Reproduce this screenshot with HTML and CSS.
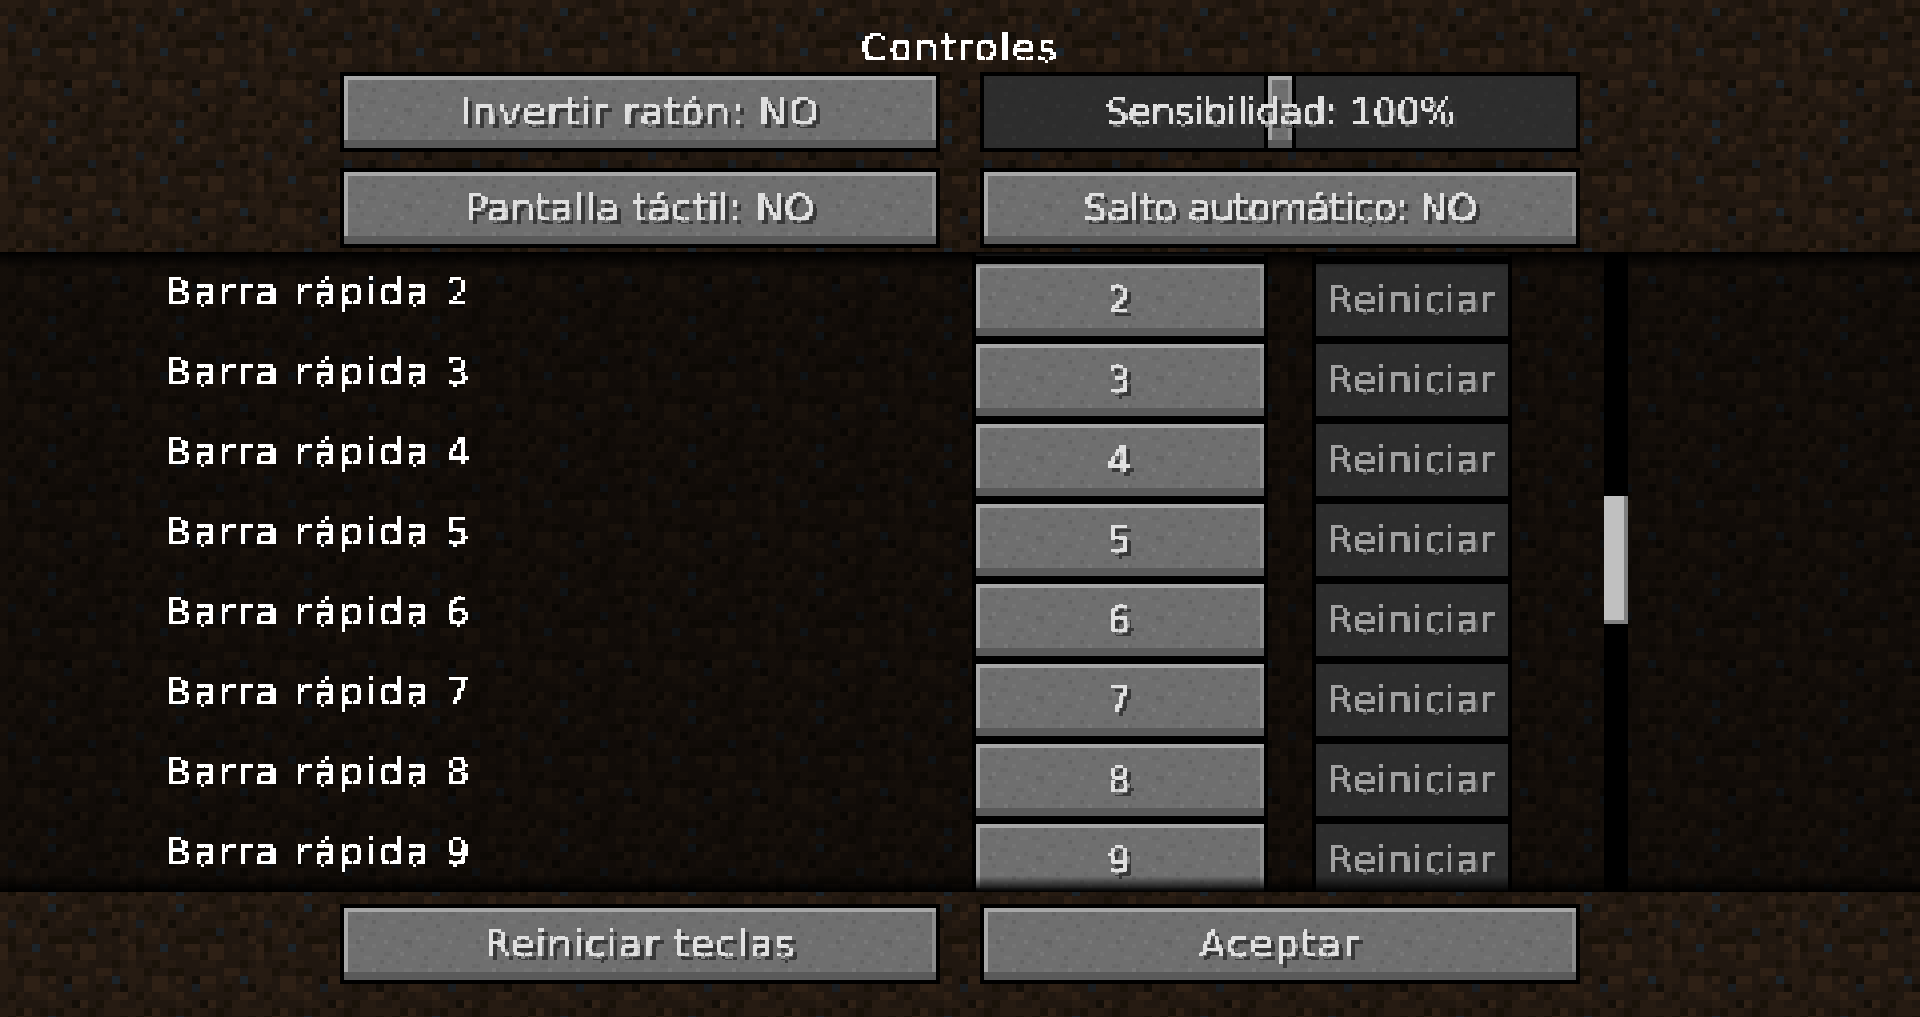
FILE: index.html
```html
<!DOCTYPE html>
<html lang="es">
<head>
  <meta charset="UTF-8">
  <meta name="viewport" content="width=device-width, initial-scale=1.0">
  <title>Controles</title>
  <link rel="stylesheet" href="styles.css">
</head>
<body>
  <!-- Filtro que lleva el texto a la rejilla de 4px -->
  <svg class="defs" width="0" height="0" aria-hidden="true">
    <filter id="pixel" x="-10%" y="-20%" width="120%" height="140%" color-interpolation-filters="sRGB">
      <feFlood x="1" y="1" width="2" height="2" flood-color="#000"/>
      <feComposite width="4" height="4"/>
      <feTile result="grid"/>
      <feComposite in="SourceGraphic" in2="grid" operator="in"/>
      <feMorphology operator="dilate" radius="1"/>
      <feComponentTransfer>
        <feFuncA type="discrete" tableValues="0 1"/>
      </feComponentTransfer>
    </filter>
  </svg>

  <div class="screen">
    <h1 class="title"><span class="txt">Controles</span></h1>

    <div class="options">
      <div class="btn"><span class="txt fit-15">Invertir ratón: NO</span></div>
      <div class="btn slider">
        <div class="btn handle"></div>
        <span class="txt fit-0">Sensibilidad: 100%</span>
      </div>
      <div class="btn"><span class="txt fit-05">Pantalla táctil: NO</span></div>
      <div class="btn"><span class="txt fit-0">Salto automático: NO</span></div>
    </div>

    <div class="list">
      <div class="rows">
        <!-- Fila anterior, casi fuera de la lista -->
        <div class="row">
          <span class="label"></span>
          <div class="btn key"></div>
          <div class="btn reset"></div>
        </div>
        <div class="row">
          <span class="label"><span class="txt">Barra rápida 2</span></span>
          <div class="btn key"><span class="txt">2</span></div>
          <div class="btn reset"><span class="txt">Reiniciar</span></div>
        </div>
        <div class="row">
          <span class="label"><span class="txt">Barra rápida 3</span></span>
          <div class="btn key"><span class="txt">3</span></div>
          <div class="btn reset"><span class="txt">Reiniciar</span></div>
        </div>
        <div class="row">
          <span class="label"><span class="txt">Barra rápida 4</span></span>
          <div class="btn key"><span class="txt">4</span></div>
          <div class="btn reset"><span class="txt">Reiniciar</span></div>
        </div>
        <div class="row">
          <span class="label"><span class="txt">Barra rápida 5</span></span>
          <div class="btn key"><span class="txt">5</span></div>
          <div class="btn reset"><span class="txt">Reiniciar</span></div>
        </div>
        <div class="row">
          <span class="label"><span class="txt">Barra rápida 6</span></span>
          <div class="btn key"><span class="txt">6</span></div>
          <div class="btn reset"><span class="txt">Reiniciar</span></div>
        </div>
        <div class="row">
          <span class="label"><span class="txt">Barra rápida 7</span></span>
          <div class="btn key"><span class="txt">7</span></div>
          <div class="btn reset"><span class="txt">Reiniciar</span></div>
        </div>
        <div class="row">
          <span class="label"><span class="txt">Barra rápida 8</span></span>
          <div class="btn key"><span class="txt">8</span></div>
          <div class="btn reset"><span class="txt">Reiniciar</span></div>
        </div>
        <div class="row">
          <span class="label"><span class="txt">Barra rápida 9</span></span>
          <div class="btn key"><span class="txt">9</span></div>
          <div class="btn reset"><span class="txt">Reiniciar</span></div>
        </div>
      </div>
      <div class="scrollbar">
        <div class="thumb"></div>
      </div>
    </div>

    <div class="footer">
      <div class="btn"><span class="txt fit-15">Reiniciar teclas</span></div>
      <div class="btn"><span class="txt">Aceptar</span></div>
    </div>
  </div>
</body>
</html>
```

FILE: styles.css
```css
:root {
  --text: #e0e0e0;
  --text-off: #a0a0a0;
  --btn: #6f6f6f;
  --btn-off: #2d2d2d;
  /* Bloque de tierra: 16 x 16 celdas de 8px */
  --dirt: url("data:image/svg+xml,%3Csvg xmlns='http://www.w3.org/2000/svg' width='128' height='128' viewBox='0 0 16 16' shape-rendering='crispEdges'%3E%3Crect width='16' height='16' fill='%23201710'/%3E%3Cg fill='none' stroke-width='1'%3E%3Cpath stroke='%23261b12' d='M0 .5h3M6 .5h2M15 .5h1M1 1.5h1M5 1.5h1M10 1.5h1M13 1.5h1M4 2.5h1M0 3.5h1M2 3.5h1M4 3.5h1M7 3.5h1M11 3.5h1M13 3.5h2M0 4.5h1M2 4.5h1M5 4.5h1M2 5.5h2M5 5.5h1M13 6.5h1M2 7.5h3M8 7.5h1M15 7.5h1M0 8.5h1M4 8.5h2M9 8.5h2M0 9.5h2M15 9.5h1M0 10.5h2M12 10.5h1M0 11.5h1M5 11.5h1M9 11.5h2M2 12.5h1M4 12.5h2M1 13.5h1M6 13.5h2M13 13.5h2M0 14.5h2M8 14.5h2M13 14.5h3M0 15.5h1M3 15.5h2M8 15.5h1'/%3E%3Cpath stroke='%232e2015' d='M5 .5h1M13 .5h1M9 1.5h1M0 2.5h1M8 2.5h1M14 2.5h1M3 4.5h1M15 5.5h1M0 6.5h1M7 6.5h2M10 6.5h2M0 7.5h1M10 7.5h2M12 9.5h2M3 10.5h2M6 10.5h1M9 10.5h2M3 11.5h2M6 12.5h1M14 12.5h2M10 13.5h1M3 14.5h1M2 15.5h1'/%3E%3Cpath stroke='%23191209' d='M10 .5h1M2 1.5h1M7 1.5h1M14 1.5h2M3 2.5h1M12 2.5h2M9 4.5h2M1 5.5h1M6 5.5h3M11 5.5h1M1 6.5h1M9 7.5h1M3 8.5h1M14 8.5h1M2 9.5h1M5 9.5h2M12 11.5h1M1 12.5h1M12 13.5h1M2 14.5h1M5 14.5h1M7 14.5h1M11 14.5h1M1 15.5h1M11 15.5h1M15 15.5h1'/%3E%3Cpath stroke='%23130e08' d='M5 3.5h1M14 4.5h1M8 10.5h1M15 11.5h1M9 13.5h1'/%3E%3Cpath stroke='%231c242a' d='M6 1.5h1M4 6.5h1M14 10.5h1M6 15.5h1'/%3E%3Cpath stroke='%231a1e22' d='M1 3.5h1M11 4.5h1M8 11.5h1'/%3E%3C/g%3E%3C/svg%3E");
  /* Ruido de la piedra de los botones: celdas de 4px */
  --noise: url("data:image/svg+xml,%3Csvg xmlns='http://www.w3.org/2000/svg' width='120' height='72' viewBox='0 0 30 18' shape-rendering='crispEdges'%3E%3Cg fill='none' stroke-width='1'%3E%3Cpath stroke='%23000' stroke-opacity='.05' d='M3 2.5h2M9 1.5h1M14 3.5h2M21 2.5h1M26 1.5h2M1 5.5h1M6 6.5h2M12 7.5h1M18 5.5h2M24 6.5h1M28 7.5h1M4 10.5h1M10 11.5h2M16 9.5h1M22 10.5h2M27 12.5h1M2 14.5h2M8 15.5h1M13 13.5h1M19 14.5h2M25 16.5h1'/%3E%3Cpath stroke='%23000' stroke-opacity='.09' d='M7 3.5h1M17 1.5h1M23 4.5h1M3 8.5h1M15 8.5h2M29 3.5h1M9 13.5h1M20 12.5h1M12 16.5h1M26 14.5h1'/%3E%3Cpath stroke='%23fff' stroke-opacity='.03' d='M1 1.5h1M6 1.5h1M11 3.5h2M19 2.5h1M24 2.5h1M5 4.5h1M9 5.5h1M15 5.5h1M21 7.5h2M27 5.5h1M1 9.5h2M7 9.5h1M13 10.5h1M19 9.5h1M25 10.5h1M5 12.5h2M11 13.5h1M17 12.5h1M23 13.5h1M29 11.5h1M3 16.5h1M15 15.5h2M22 16.5h1'/%3E%3Cpath stroke='%23fff' stroke-opacity='.07' d='M4 7.5h1M10 8.5h1M18 7.5h1M26 8.5h1M14 11.5h1M21 15.5h1M7 15.5h1M28 15.5h1'/%3E%3C/g%3E%3C/svg%3E");
  /* Velo para que el ruido casi no se note en los botones oscuros */
  --veil: linear-gradient(rgba(45, 45, 45, 0.6), rgba(45, 45, 45, 0.6));
}

* {
  margin: 0;
  padding: 0;
  box-sizing: border-box;
}

html,
body {
  height: 100%;
}

body {
  font-family: 'DejaVu Sans', sans-serif;
  font-size: 38px;
  line-height: 44px;
  letter-spacing: 2px;
  color: var(--text);
  background: var(--dirt) 0 0;
  overflow: hidden;
}

.defs {
  position: absolute;
}

.screen {
  display: flex;
  flex-direction: column;
  height: 100%;
}

.txt {
  display: inline-block;
  padding: 2px 8px;
  white-space: nowrap;
  text-shadow: 4px 4px 0 #383838;
  filter: url(#pixel);
}

/* Ajuste de ancho de los textos largos */
.fit-0 {
  letter-spacing: -0.7px;
}

.fit-05 {
  letter-spacing: 0.4px;
}

.fit-15 {
  letter-spacing: 1.4px;
}

.title {
  height: 72px;
  padding-top: 24px;
  font: inherit;
  color: #fff;
  text-align: center;
}

.title .txt {
  text-shadow: none;
}

/* Botones */
.btn {
  display: flex;
  align-items: center;
  justify-content: center;
  height: 80px;
  border: 4px solid #000;
  background: var(--noise), var(--btn);
  box-shadow:
    inset 0 -8px 0 #5a5a5a,
    inset 0 4px 0 #a8a8a8,
    inset 4px 0 0 #a8a8a8,
    inset -4px 0 0 #8c8c8c;
}

.options,
.footer {
  display: grid;
  grid-template-columns: 600px 600px;
  justify-content: center;
  column-gap: 40px;
}

.options {
  row-gap: 16px;
  height: 180px;
  padding-bottom: 4px;
}

.slider {
  position: relative;
  background: var(--veil), var(--noise), var(--btn-off);
  box-shadow: none;
}

.slider .txt {
  position: relative;
}

.handle {
  position: absolute;
  top: 0;
  left: 280px;
  width: 32px;
  height: 72px;
  border-width: 0 4px;
}

/* Lista de teclas */
.list {
  position: relative;
  height: 640px;
  overflow: hidden;
  background: linear-gradient(rgba(0, 0, 0, 0.48), rgba(0, 0, 0, 0.48)), var(--dirt) 0 72px;
}

.list::before,
.list::after {
  content: "";
  position: absolute;
  left: 0;
  right: 0;
  height: 16px;
  z-index: 2;
}

.list::before {
  top: 0;
  background: linear-gradient(#000, transparent);
}

.list::after {
  bottom: 0;
  background: linear-gradient(transparent, #000);
}

.rows {
  margin-top: -72px;
}

.row {
  display: flex;
  align-items: center;
  height: 80px;
  padding-left: 157px;
}

.label {
  width: 815px;
  padding-bottom: 16px;
  letter-spacing: 2.5px;
  color: #fff;
}

.label .txt {
  text-shadow: none;
}

.key {
  width: 296px;
}

.reset {
  width: 200px;
  margin-left: 44px;
  letter-spacing: 0.6px;
  color: var(--text-off);
  background: var(--veil), var(--noise), var(--btn-off);
  box-shadow: none;
}

.reset .txt {
  text-shadow: 4px 4px 0 #282828;
}

.scrollbar {
  position: absolute;
  top: 0;
  bottom: 0;
  left: 1604px;
  width: 24px;
  background: #000;
}

.thumb {
  width: 24px;
  height: 128px;
  margin-top: 244px;
  background: #c0c0c0;
  box-shadow: inset -4px -4px 0 #808080;
}

.footer {
  padding-top: 12px;
}
```
